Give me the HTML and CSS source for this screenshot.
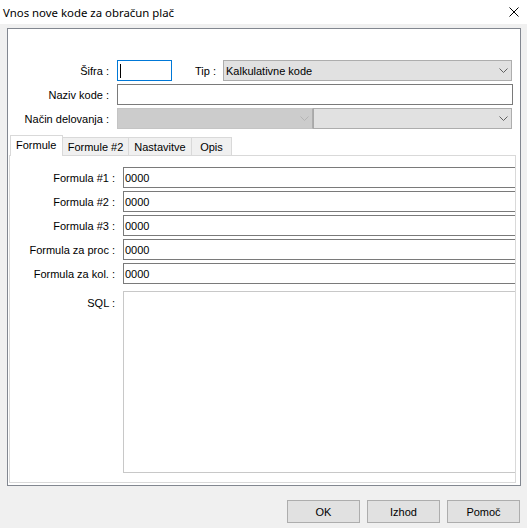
FILE: index.html
```html
<!DOCTYPE html>
<html lang="sl">
<head>
<meta charset="utf-8">
<title>Vnos nove kode za obračun plač</title>
<link rel="stylesheet" href="styles.css">
</head>
<body>
<div class="dialog">
  <div class="titlebar">
    <span class="title">Vnos nove kode za obračun plač</span>
    <svg class="close" width="10" height="10" viewBox="0 0 10 10">
      <path d="M0.5 0.5 L9.5 9.5 M9.5 0.5 L0.5 9.5" stroke="#000" stroke-width="1" fill="none"/>
    </svg>
  </div>

  <div class="frame">
    <div class="head">
      <div class="row">
        <label class="lbl">Šifra :</label>
        <div class="edit code"><span class="caret"></span></div>
        <label class="lbl-tip">Tip :</label>
        <div class="combo combo-type">
          <span>Kalkulativne kode</span>
          <svg class="chev" width="9" height="5" viewBox="0 0 9 5"><polyline points="0.5,0.5 4.5,4.5 8.5,0.5" fill="none" stroke="#606060" stroke-width="1"/></svg>
        </div>
      </div>
      <div class="row">
        <label class="lbl">Naziv kode :</label>
        <div class="edit name"></div>
      </div>
      <div class="row">
        <label class="lbl">Način delovanja :</label>
        <div class="combo combo-mode disabled">
          <span></span>
          <svg class="chev" width="9" height="5" viewBox="0 0 9 5"><polyline points="0.5,0.5 4.5,4.5 8.5,0.5" fill="none" stroke="#b4b4b4" stroke-width="1"/></svg>
        </div>
        <div class="combo combo-sub">
          <span></span>
          <svg class="chev" width="9" height="5" viewBox="0 0 9 5"><polyline points="0.5,0.5 4.5,4.5 8.5,0.5" fill="none" stroke="#606060" stroke-width="1"/></svg>
        </div>
      </div>
    </div>

    <div class="tabs">
      <div class="tabstrip">
        <div class="tab active t1">Formule</div>
        <div class="tab t2">Formule #2</div>
        <div class="tab t3">Nastavitve</div>
        <div class="tab t4">Opis</div>
      </div>
      <div class="page">
        <label class="flbl">Formula #1 :</label>
        <div class="field">0000</div>
        <label class="flbl">Formula #2 :</label>
        <div class="field">0000</div>
        <label class="flbl">Formula #3 :</label>
        <div class="field">0000</div>
        <label class="flbl">Formula za proc :</label>
        <div class="field">0000</div>
        <label class="flbl">Formula za kol. :</label>
        <div class="field">0000</div>
        <label class="flbl sql-lbl">SQL :</label>
        <div class="sql"></div>
      </div>
    </div>
  </div>

  <div class="buttons">
    <div class="btn">OK</div>
    <div class="btn">Izhod</div>
    <div class="btn">Pomoč</div>
  </div>
</div>
</body>
</html>
```

FILE: styles.css
```css
* {
  box-sizing: border-box;
}

html,
body {
  margin: 0;
  padding: 0;
}

body {
  width: 527px;
  height: 528px;
  overflow: hidden;
  background: #f0f0f0;
  font-family: "Liberation Sans", Arial, sans-serif;
  font-size: 11px;
  color: #000;
}

.dialog {
  width: 527px;
  height: 528px;
  display: flex;
  flex-direction: column;
}

/* window caption */
.titlebar {
  height: 24px;
  background: #fff;
  display: flex;
  align-items: center;
  justify-content: space-between;
  padding: 0 8px 0 3px;
}

.title {
  font-family: "Noto Sans", "Open Sans", sans-serif;
  font-size: 11.4px;
  color: #000;
}

.close {
  display: block;
}

/* white client frame */
.frame {
  margin: 4px 0 0 7px;
  width: 514px;
  height: 458px;
  border: 1px solid #828790;
  background: #fff;
  display: flex;
  flex-direction: column;
}

.head {
  padding-top: 31px;
  display: flex;
  flex-direction: column;
  gap: 3px;
}

.row {
  display: flex;
  align-items: center;
  height: 21px;
}

.lbl {
  width: 101px;
  margin-right: 8px;
  text-align: right;
  white-space: nowrap;
}

.lbl-tip {
  width: 44px;
  margin-right: 7px;
  text-align: right;
}

.edit {
  height: 21px;
  border: 1px solid #7a7a7a;
  background: #fff;
}

.code {
  width: 55px;
  border-color: #0078d7;
  display: flex;
  align-items: center;
  padding-left: 2px;
}

.caret {
  display: block;
  width: 1px;
  height: 14px;
  background: #000;
}

.name {
  width: 396px;
}

.combo {
  height: 21px;
  border: 1px solid #adadad;
  background: #e1e1e1;
  display: flex;
  align-items: center;
  justify-content: space-between;
  padding: 0 3px 0 2px;
}

.chev {
  display: block;
  flex: none;
}

.combo-type {
  width: 289px;
}

.combo-mode {
  width: 196px;
}

.combo.disabled {
  background: #cccccc;
  border-color: #c4c4c4;
  border-right-color: #adadad;
}

.combo-sub {
  width: 199px;
  border-left-color: #a8a8a8;
}

/* tab control */
.tabs {
  flex: 1;
  margin: 6px 4px 2px 1px;
  display: flex;
  flex-direction: column;
}

.tabstrip {
  height: 20px;
  padding-left: 1px;
  display: flex;
  align-items: flex-end;
}

.tab {
  height: 18px;
  border: 1px solid #d9d9d9;
  border-left: none;
  border-bottom: none;
  background: #f0f0f0;
  display: flex;
  align-items: center;
  justify-content: center;
  white-space: nowrap;
}

.tab.active {
  height: 21px;
  margin-bottom: -1px;
  border-left: 1px solid #d9d9d9;
  background: #fff;
  position: relative;
  z-index: 1;
  justify-content: flex-start;
  align-items: flex-start;
  padding: 3px 0 0 5px;
}

.t1 { width: 53px; }
.t2 { width: 66px; }
.t3 { width: 63px; }
.t4 { width: 40px; }

.page {
  flex: 1;
  border: 1px solid #d9d9d9;
  background: #fff;
  overflow: hidden;
  padding-top: 11px;
  display: grid;
  grid-template-columns: 105px 1fr;
  grid-template-rows: repeat(5, 21px) 182px;
  column-gap: 8px;
  row-gap: 3px;
  align-content: start;
}

.flbl {
  text-align: right;
  align-self: center;
  white-space: nowrap;
}

.field {
  width: calc(100% + 8px);
  height: 21px;
  border: 1px solid #7a7a7a;
  background: #fff;
  padding-left: 1px;
  display: flex;
  align-items: center;
}

.sql-lbl {
  align-self: start;
  margin-top: 10px;
}

.sql {
  margin-top: 4px;
  width: calc(100% + 8px);
  height: 182px;
  border: 1px solid #c8c8c8;
  background: #fff;
}

/* dialog buttons */
.buttons {
  margin: 14px 7px 0 0;
  display: flex;
  justify-content: flex-end;
  gap: 7px;
}

.btn {
  width: 73px;
  height: 23px;
  border: 1px solid #adadad;
  background: #e1e1e1;
  display: flex;
  align-items: center;
  justify-content: center;
  font-size: 11px;
}
```
